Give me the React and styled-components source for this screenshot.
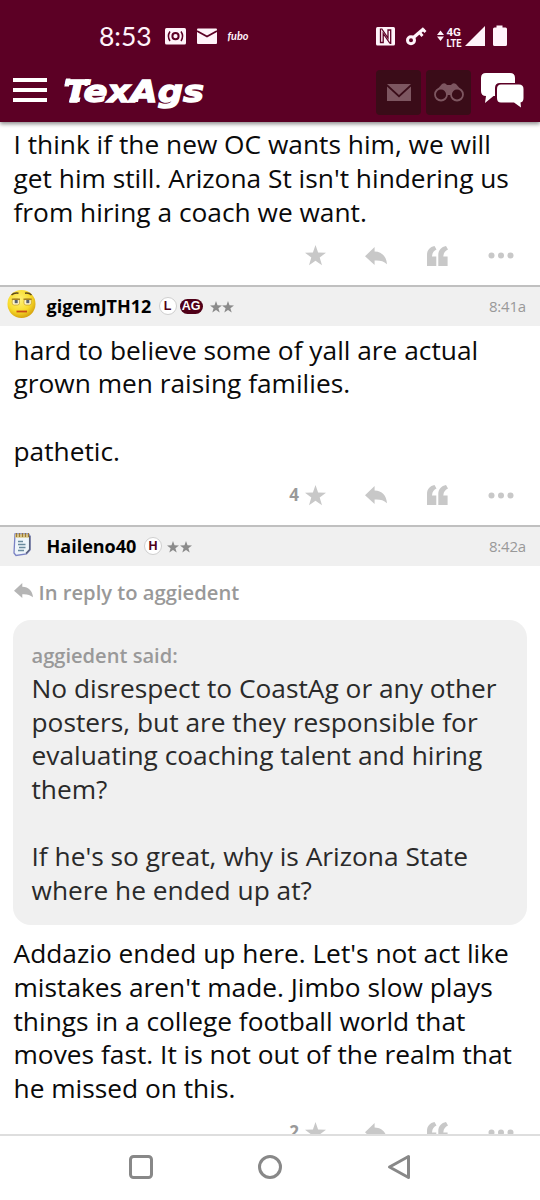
import React from 'react'
import styled, { createGlobalStyle } from 'styled-components'

const GlobalStyle = createGlobalStyle`
* { box-sizing: border-box; }
body {
  margin: 0;
  background: white;
  font-family: 'Open Sans', 'Noto Sans', sans-serif;
}
svg { display: block; flex-shrink: 0; }
`
const Container = styled.div`
width: 540px;
height: 1200px;
display: flex;
flex-direction: column;
overflow: hidden;
`
const Header = styled.header`
height: 122px;
flex-shrink: 0;
background-color: #5c0025;
box-shadow: 0 2px 4px rgba(0,0,0,0.45);
position: relative;
z-index: 1;
`
const StatusBar = styled.div`
height: 70px;
padding: 2px 33px 0 99px;
display: flex;
align-items: center;
justify-content: space-between;
`
const StatusGroup = styled.div`
display: flex;
align-items: center;
`
const Clock = styled.span`
font-family: Lato, sans-serif;
font-size: 26.5px;
line-height: 30px;
width: 66px;
color: #fff3fa;
white-space: nowrap;
`
const Toolbar = styled.div`
height: 52px;
padding: 0 16px 8px 13px;
display: flex;
align-items: center;
`
const MenuButton = styled.button`
width: 34px;
height: 24px;
margin: -4px 16px 0 0;
padding: 0;
border: none;
background: none;
display: flex;
flex-direction: column;
justify-content: space-between;
`
const MenuBar = styled.span`
width: 34px;
height: 4px;
background-color: white;
`
const Tools = styled.div`
margin-left: auto;
display: flex;
align-items: center;
gap: 5px;
`
const ToolButton = styled.div`
width: 45px;
height: 45px;
border-radius: 4px;
background-color: #3a0c18;
display: flex;
align-items: center;
justify-content: center;
`
const ChatButton = styled.div`
margin-left: 4px;
padding-bottom: 3px;
`
const Feed = styled.main`
height: 1012px;
flex-shrink: 0;
padding-top: 6.4px;
overflow: hidden;
`
const PostHead = styled.div`
height: 41px;
border-top: 2px solid #c0c0c0;
background-color: #f0f0f0;
padding: 0 14px 0 7px;
display: flex;
align-items: center;
`
const Avatar = styled.div`
width: 30px;
margin-right: 9.5px;
padding-bottom: 5px;
`
const Username = styled.span`
margin-top: -2px;
font-size: 18px;
font-weight: 700;
line-height: 24px;
width: ${props => props.$width}px;
white-space: nowrap;
color: black;
`
const Badge = styled.span`
height: ${props => props.$pill ? '15px' : '18px'};
width: ${props => props.$pill ? '23px' : '18px'};
margin-right: ${props => props.$gap}px;
margin-top: -1px;
border-radius: 9px;
border: ${props => props.$pill ? 'none' : '1px solid #cfcfcf'};
background-color: ${props => props.$pill ? '#500018' : 'white'};
color: ${props => props.$pill ? 'white' : '#500018'};
font: bold 12.5px 'Liberation Sans', sans-serif;
display: flex;
align-items: center;
justify-content: center;
`
const Level = styled.span`
display: flex;
gap: 0.5px;
`
const Time = styled.span`
margin-left: auto;
margin-top: -1px;
font-size: 15px;
color: #999;
letter-spacing: -0.2px;
`
const Body = styled.div`
padding: ${props => props.$top || 0}px 13.5px 0;
font-size: 26.3px;
line-height: 33.6px;
color: #0a0a0a;
`
const Line = styled.div`
height: 33.6px;
white-space: nowrap;
`
const Actions = styled.div`
height: ${props => props.$height}px;
padding: 0 26px 2.5px 0;
display: flex;
align-items: center;
justify-content: flex-end;
`
const Likes = styled.span`
margin-right: 6px;
font-size: 17px;
font-weight: 700;
line-height: 20px;
color: #999;
`
const Action = styled.span`
margin-right: ${props => props.$gap || 0}px;
`
const ReplyTo = styled.div`
height: 54px;
padding: 0 13.5px 2px;
display: flex;
align-items: center;
font-size: 20.2px;
font-weight: 600;
color: #999;
white-space: nowrap;
`
const ReplyMark = styled.span`
margin-right: 6px;
padding-bottom: 4px;
`
const Quote = styled.blockquote`
margin: 0 13px;
height: 304.5px;
padding: 21px 18.5px 0;
border-radius: 18px;
background-color: #f0f0f0;
`
const QuoteAuthor = styled.div`
height: 31px;
line-height: 30px;
font-size: 20.1px;
font-weight: 600;
color: #999;
`
const QuoteBody = styled.div`
font-size: 26.3px;
line-height: 33.6px;
color: #2a2a2a;
`
const BottomNav = styled.nav`
height: 66px;
border-top: 2px solid #dedede;
background-color: white;
display: flex;
justify-content: center;
gap: 103px;
padding-top: 18px;
`

const Star = ({ size = 21, color = '#c8c8c8' }) => (
  <svg width={size} height={size} viewBox="0 0 21 21">
    <path fill={color} d="M10.5 0 13.1 7.5 21 7.7 14.7 12.5 17 20.3 10.5 15.7 4 20.3 6.3 12.5 0 7.7 7.9 7.5Z" />
  </svg>
)

const ReplyIcon = ({ width = 22, height = 18, color = '#c8c8c8' }) => (
  <svg width={width} height={height} viewBox="0 0 22 18" preserveAspectRatio="none">
    <path fill={color} d="M0 9.300 9.600 0V4.500C17 4.700 21.500 9.500 22 17.200 18.500 14 15 13.200 9.600 13.500V18Z" />
  </svg>
)

const QuoteIcon = () => (
  <svg width="21" height="20" viewBox="0 0 21 20">
    <path fill="#c8c8c8" d="M0 20V9C0 4 3 .8 7.500 0L9.500 3.500C7 4.500 5.300 6.500 5 10.500H9.300V20ZM11.300 20V9C11.300 4 14.500 .8 19 0L21 3.500C18.500 4.500 16.600 6.500 16.300 10.500H20.600V20Z" />
  </svg>
)

const Dots = () => (
  <svg width="26" height="7" viewBox="0 0 26 7" fill="#c8c8c8">
    <circle cx="3.5" cy="3.5" r="3" />
    <circle cx="13" cy="3.5" r="3" />
    <circle cx="22.500" cy="3.500" r="3" />
  </svg>
)

const SadFace = () => (
  <svg width="30" height="30" viewBox="0 0 30 30">
    <defs>
      <radialGradient id="face" cx="42%" cy="35%" r="65%">
        <stop offset="0" stopColor="#fff27a" />
        <stop offset=".65" stopColor="#f8db2a" />
        <stop offset="1" stopColor="#d8a510" />
      </radialGradient>
    </defs>
    <circle cx="14.500" cy="15" r="14" fill="url(#face)" />
    <rect x="5.200" y="10" width="7.300" height="6" rx="2" fill="#fff6c4" stroke="#b98e20" strokeWidth=".6" />
    <rect x="17" y="10" width="7.300" height="6" rx="2" fill="#fff6c4" stroke="#b98e20" strokeWidth=".6" />
    <path d="M4.800 10.300H13M16.500 10.300H24.700" stroke="#a58222" strokeWidth="1.400" />
    <rect x="7.700" y="11" width="3" height="3.200" fill="#59606f" />
    <rect x="19.300" y="11" width="3" height="3.200" fill="#59606f" />
    <path d="M4.500 6Q7 3.500 11.500 4.200M18 4.200Q22 3.500 24.500 6" stroke="#604a1b" strokeWidth="1.400" fill="none" />
    <path d="M9.500 22.500H20" stroke="#c94c18" strokeWidth="1.800" />
  </svg>
)

const Notepad = () => (
  <svg width="30" height="26" viewBox="0 0 30 26">
    <path d="M8 3H21.500L23 5V19L19.500 23 9 24.500 7 22Z" fill="#eef5fa" stroke="#7a82c4" strokeWidth="1.300" />
    <path d="M22.700 5V18.500L19 22.500" stroke="#59617a" strokeWidth="1.500" fill="none" />
    <path d="M8 5H22" stroke="#dcca8c" strokeWidth="3.500" />
    <path d="M9.500 2V6M12.500 2V6M15.500 2V6M18.500 2V6M21.500 2V6" stroke="#9b7933" strokeWidth="1.200" />
    <path d="M11 10.500H16M11 13.500H18.500M12 16.500H18.500M11 19.500H17" stroke="#698a9d" strokeWidth="1.300" />
  </svg>
)

const LeftStatus = () => (
  <svg width="84" height="24" viewBox="0 0 84 24">
    <rect x="0" y="4" width="21" height="16.500" rx="1.500" fill="#fff3fa" />
    <circle cx="10.500" cy="12.200" r="3.100" fill="none" stroke="#5c0025" strokeWidth="2" />
    <path d="M5 7.500Q1.800 12.200 5 17M16 7.500Q19.200 12.200 16 17" fill="none" stroke="#5c0025" strokeWidth="1.500" />
    <rect x="32" y="4.500" width="20" height="15.500" rx="1" fill="#fff3fa" />
    <path d="M32 7 42 12.500 52 7" fill="none" stroke="#5c0025" strokeWidth="1.800" />
    <text x="62.500" y="16.300" fill="#fff3fa" fontFamily="Lato" fontSize="11.500" fontWeight="700" fontStyle="italic" textLength="21" lengthAdjust="spacingAndGlyphs">fubo</text>
  </svg>
)

const RightStatus = () => (
  <svg width="132" height="24" viewBox="0 0 132 24" fill="#fff3fa">
    <rect x="1" y="3" width="19" height="18.500" rx="1.500" />
    <path d="M5.500 4.500V18.500H8.200V9.500L15 19.500M15.700 20V6H13V14L6.500 4.500" fill="none" stroke="#5c0025" strokeWidth="1.300" />
    <circle cx="36" cy="16.300" r="3.500" fill="none" stroke="#fff3fa" strokeWidth="3" />
    <path d="M38.500 13.500 49 4.500" fill="none" stroke="#fff3fa" strokeWidth="3.300" />
    <path d="M44.500 8.500 47.500 12M48 5.500 50.500 8" fill="none" stroke="#fff3fa" strokeWidth="2.800" />
    <path d="M62 11 65.500 6.500 69 11ZM62 12.500H69L65.500 17Z" />
    <text x="71.500" y="11.700" fontFamily="Roboto" fontSize="11.300" fontWeight="700" textLength="14.500" lengthAdjust="spacingAndGlyphs">4G</text>
    <text x="71.500" y="22.500" fontFamily="Roboto" fontSize="11.300" fontWeight="700" textLength="15" lengthAdjust="spacingAndGlyphs">LTE</text>
    <path d="M90 22 110 2V22Z" />
    <path d="M121.500 1.500H127.500V3.500H130.500Q132 3.500 132 5V20.500Q132 22 130.500 22H119.500Q118 22 118 20.500V5Q118 3.500 119.500 3.500H121.500Z" />
  </svg>
)

const Logo = () => (
  <svg width="146" height="38" viewBox="0 0 146 38">
    <text x="1" y="28.500" fill="white" stroke="white" strokeWidth="1.300" fontFamily="DejaVu Sans" fontSize="31" fontWeight="700" fontStyle="italic" textLength="140" lengthAdjust="spacingAndGlyphs">TexAgs</text>
    <path d="M3 5.500H7.500L6 13.500H1.300ZM22 6H26L24.500 13H21.500ZM7 24.500H17.500L16.500 29H6ZM71.500 24.500H76L75 29H69.500Z" fill="white" />
  </svg>
)

const Mail = () => (
  <svg width="24" height="17" viewBox="0 0 24 17" fill="#7d5660">
    <path d="M0 0H24L12 11ZM0 2.500 12 13.500 24 2.500V17H0Z" />
  </svg>
)

const Binoculars = () => (
  <svg width="30" height="20" viewBox="0 0 30 20">
    <path fill="#7d5660" d="M1 10 8 2Q11 0 13 3H17Q19 0 22 2L29 10 26 13H4Z" />
    <circle cx="7" cy="12.500" r="6" fill="#3a0c18" stroke="#7d5660" strokeWidth="1.800" />
    <circle cx="23" cy="12.500" r="6" fill="#3a0c18" stroke="#7d5660" strokeWidth="1.800" />
  </svg>
)

const Chat = () => (
  <svg width="44" height="35" viewBox="0 0 44 35" fill="white">
    <path d="M6 0H30Q35 0 35 5V10H20Q15 10 15 15V23H13.500L5 30 6 23Q1 23 1 18V5Q1 0 6 0Z" />
    <path d="M21 11.500H39Q43.500 11.500 43.500 16V25Q43.500 29 40.500 29.500L41 34.500 34 29.500H21Q17 29.500 17 25V16Q17 11.500 21 11.500Z" />
  </svg>
)

function PostActions({ likes, height }) {
  return (
    <Actions $height={height}>
      {likes && <Likes>{likes}</Likes>}
      <Action $gap={39}><Star /></Action>
      <Action $gap={39.5}><ReplyIcon /></Action>
      <Action $gap={40.5}><QuoteIcon /></Action>
      <Action><Dots /></Action>
    </Actions>
  )
}

function TextLines({ lines }) {
  return lines.map((line, index) => <Line key={index}>{line}</Line>)
}

const first = ['I think if the new OC wants him, we will', "get him still. Arizona St isn't hindering us", 'from hiring a coach we want.']
const second = ['hard to believe some of yall are actual', 'grown men raising families.', '', 'pathetic.']
const quoted = ['No disrespect to CoastAg or any other', 'posters, but are they responsible for', 'evaluating coaching talent and hiring', 'them?', '', "If he's so great, why is Arizona State", 'where he ended up at?']
const third = ["Addazio ended up here. Let's not act like", "mistakes aren't made. Jimbo slow plays", 'things in a college football world that', 'moves fast. It is not out of the realm that', 'he missed on this.']

function App() {
  return (
    <Container>
      <GlobalStyle />
      <Header>
        <StatusBar>
          <StatusGroup>
            <Clock>8:53</Clock>
            <LeftStatus />
          </StatusGroup>
          <RightStatus />
        </StatusBar>
        <Toolbar>
          <MenuButton>
            <MenuBar />
            <MenuBar />
            <MenuBar />
          </MenuButton>
          <Logo />
          <Tools>
            <ToolButton><Mail /></ToolButton>
            <ToolButton><Binoculars /></ToolButton>
            <ChatButton><Chat /></ChatButton>
          </Tools>
        </Toolbar>
      </Header>
      <Feed>
        <Body><TextLines lines={first} /></Body>
        <PostActions height={56} />

        <PostHead>
          <Avatar><SadFace /></Avatar>
          <Username $width={112}>gigemJTH12</Username>
          <Badge $gap={3}>L</Badge>
          <Badge $pill $gap={7}>AG</Badge>
          <Level>
            <Star size={12} color="#8b8b8b" />
            <Star size={12} color="#8b8b8b" />
          </Level>
          <Time>8:41a</Time>
        </PostHead>
        <Body $top={7.6}><TextLines lines={second} /></Body>
        <PostActions likes={4} height={57} />

        <PostHead>
          <Avatar><Notepad /></Avatar>
          <Username $width={97.5}>Haileno40</Username>
          <Badge $gap={5}>H</Badge>
          <Level>
            <Star size={12} color="#8b8b8b" />
            <Star size={12} color="#8b8b8b" />
          </Level>
          <Time>8:42a</Time>
        </PostHead>
        <ReplyTo>
          <ReplyMark><ReplyIcon width={19} height={15} color="#b5b5b5" /></ReplyMark>
          In reply to aggiedent
        </ReplyTo>
        <Quote>
          <QuoteAuthor>aggiedent said:</QuoteAuthor>
          <QuoteBody><TextLines lines={quoted} /></QuoteBody>
        </Quote>
        <Body $top={12.8}><TextLines lines={third} /></Body>
        <PostActions likes={2} height={56} />
      </Feed>
      <BottomNav>
        <svg width="26" height="26" viewBox="0 0 26 26" fill="none" stroke="#888" strokeWidth="3">
          <rect x="2.500" y="2.500" width="21" height="21" rx="3" />
        </svg>
        <svg width="26" height="26" viewBox="0 0 26 26" fill="none" stroke="#888" strokeWidth="3">
          <circle cx="13" cy="13" r="10.500" />
        </svg>
        <svg width="26" height="26" viewBox="0 0 26 26" fill="none" stroke="#888" strokeWidth="3" strokeLinejoin="round">
          <path d="M22.500 2.500V23.500L3.500 13Z" />
        </svg>
      </BottomNav>
    </Container>
  )
}

export default App
